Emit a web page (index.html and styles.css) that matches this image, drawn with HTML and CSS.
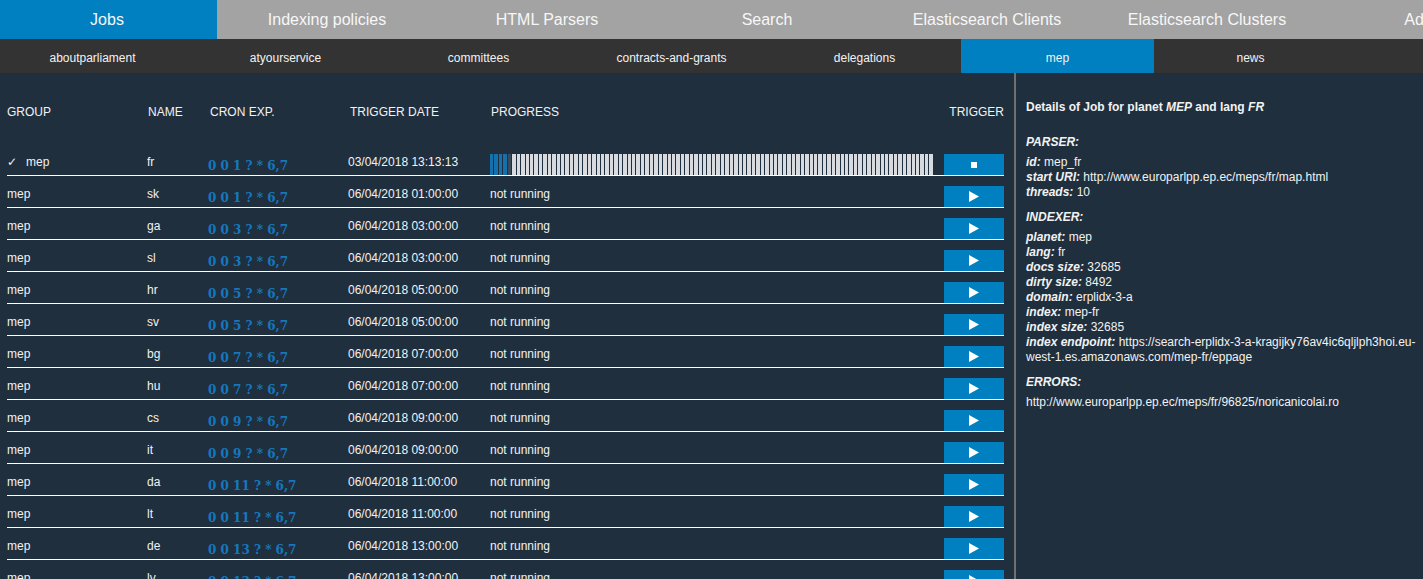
FILE: index.html
```html
<!DOCTYPE html>
<html>
<head>
<meta charset="utf-8">
<title>Jobs</title>
<link rel="stylesheet" href="styles.css">
</head>
<body>
<nav class="topnav">
  <div class="tabs">
    <a class="tab active">Jobs</a>
    <a class="tab">Indexing policies</a>
    <a class="tab">HTML Parsers</a>
    <a class="tab">Search</a>
    <a class="tab">Elasticsearch Clients</a>
    <a class="tab">Elasticsearch Clusters</a>
    <a class="tab">Admin</a>
  </div>
</nav>
<nav class="subnav">
  <div class="subtabs">
    <a class="subtab">aboutparliament</a>
    <a class="subtab">atyourservice</a>
    <a class="subtab">committees</a>
    <a class="subtab">contracts-and-grants</a>
    <a class="subtab">delegations</a>
    <a class="subtab active">mep</a>
    <a class="subtab">news</a>
  </div>
</nav>
<main class="main">
  <section class="jobs">
    <div class="row head">
      <div class="cell">GROUP</div>
      <div class="cell h1">NAME</div>
      <div class="cell h2">CRON EXP.</div>
      <div class="cell h2">TRIGGER DATE</div>
      <div class="cell h1">PROGRESS</div>
      <div class="cell right">TRIGGER</div>
    </div>
    <div class="row">
      <div class="cell"><span class="check">✓</span>mep</div>
      <div class="cell">fr</div>
      <div class="cell cron">0 0 1 ? * 6,7</div>
      <div class="cell">03/04/2018 13:13:13</div>
      <div class="cell progcell"><div class="progress" id="progress"></div></div>
      <div class="cell btncell"><button class="btn"><span class="stop"></span></button></div>
    </div>
    <div class="row"><div class="cell">mep</div><div class="cell">sk</div><div class="cell cron">0 0 1 ? * 6,7</div><div class="cell">06/04/2018 01:00:00</div><div class="cell">not running</div><div class="cell btncell"><button class="btn"><svg width="10" height="11" viewBox="0 0 10 11"><polygon points="0,0 10,5.5 0,11" fill="#fff"/></svg></button></div></div>
    <div class="row"><div class="cell">mep</div><div class="cell">ga</div><div class="cell cron">0 0 3 ? * 6,7</div><div class="cell">06/04/2018 03:00:00</div><div class="cell">not running</div><div class="cell btncell"><button class="btn"><svg width="10" height="11" viewBox="0 0 10 11"><polygon points="0,0 10,5.5 0,11" fill="#fff"/></svg></button></div></div>
    <div class="row"><div class="cell">mep</div><div class="cell">sl</div><div class="cell cron">0 0 3 ? * 6,7</div><div class="cell">06/04/2018 03:00:00</div><div class="cell">not running</div><div class="cell btncell"><button class="btn"><svg width="10" height="11" viewBox="0 0 10 11"><polygon points="0,0 10,5.5 0,11" fill="#fff"/></svg></button></div></div>
    <div class="row"><div class="cell">mep</div><div class="cell">hr</div><div class="cell cron">0 0 5 ? * 6,7</div><div class="cell">06/04/2018 05:00:00</div><div class="cell">not running</div><div class="cell btncell"><button class="btn"><svg width="10" height="11" viewBox="0 0 10 11"><polygon points="0,0 10,5.5 0,11" fill="#fff"/></svg></button></div></div>
    <div class="row"><div class="cell">mep</div><div class="cell">sv</div><div class="cell cron">0 0 5 ? * 6,7</div><div class="cell">06/04/2018 05:00:00</div><div class="cell">not running</div><div class="cell btncell"><button class="btn"><svg width="10" height="11" viewBox="0 0 10 11"><polygon points="0,0 10,5.5 0,11" fill="#fff"/></svg></button></div></div>
    <div class="row"><div class="cell">mep</div><div class="cell">bg</div><div class="cell cron">0 0 7 ? * 6,7</div><div class="cell">06/04/2018 07:00:00</div><div class="cell">not running</div><div class="cell btncell"><button class="btn"><svg width="10" height="11" viewBox="0 0 10 11"><polygon points="0,0 10,5.5 0,11" fill="#fff"/></svg></button></div></div>
    <div class="row"><div class="cell">mep</div><div class="cell">hu</div><div class="cell cron">0 0 7 ? * 6,7</div><div class="cell">06/04/2018 07:00:00</div><div class="cell">not running</div><div class="cell btncell"><button class="btn"><svg width="10" height="11" viewBox="0 0 10 11"><polygon points="0,0 10,5.5 0,11" fill="#fff"/></svg></button></div></div>
    <div class="row"><div class="cell">mep</div><div class="cell">cs</div><div class="cell cron">0 0 9 ? * 6,7</div><div class="cell">06/04/2018 09:00:00</div><div class="cell">not running</div><div class="cell btncell"><button class="btn"><svg width="10" height="11" viewBox="0 0 10 11"><polygon points="0,0 10,5.5 0,11" fill="#fff"/></svg></button></div></div>
    <div class="row"><div class="cell">mep</div><div class="cell">it</div><div class="cell cron">0 0 9 ? * 6,7</div><div class="cell">06/04/2018 09:00:00</div><div class="cell">not running</div><div class="cell btncell"><button class="btn"><svg width="10" height="11" viewBox="0 0 10 11"><polygon points="0,0 10,5.5 0,11" fill="#fff"/></svg></button></div></div>
    <div class="row"><div class="cell">mep</div><div class="cell">da</div><div class="cell cron">0 0 11 ? * 6,7</div><div class="cell">06/04/2018 11:00:00</div><div class="cell">not running</div><div class="cell btncell"><button class="btn"><svg width="10" height="11" viewBox="0 0 10 11"><polygon points="0,0 10,5.5 0,11" fill="#fff"/></svg></button></div></div>
    <div class="row"><div class="cell">mep</div><div class="cell">lt</div><div class="cell cron">0 0 11 ? * 6,7</div><div class="cell">06/04/2018 11:00:00</div><div class="cell">not running</div><div class="cell btncell"><button class="btn"><svg width="10" height="11" viewBox="0 0 10 11"><polygon points="0,0 10,5.5 0,11" fill="#fff"/></svg></button></div></div>
    <div class="row"><div class="cell">mep</div><div class="cell">de</div><div class="cell cron">0 0 13 ? * 6,7</div><div class="cell">06/04/2018 13:00:00</div><div class="cell">not running</div><div class="cell btncell"><button class="btn"><svg width="10" height="11" viewBox="0 0 10 11"><polygon points="0,0 10,5.5 0,11" fill="#fff"/></svg></button></div></div>
    <div class="row"><div class="cell">mep</div><div class="cell">lv</div><div class="cell cron">0 0 13 ? * 6,7</div><div class="cell">06/04/2018 13:00:00</div><div class="cell">not running</div><div class="cell btncell"><button class="btn"><svg width="10" height="11" viewBox="0 0 10 11"><polygon points="0,0 10,5.5 0,11" fill="#fff"/></svg></button></div></div>
  </section>
  <aside class="details">
    <div class="title">Details of Job for planet <em>MEP</em> and lang <em>FR</em></div>
    <div class="sect">PARSER:</div>
    <div class="kv"><b>id:</b> mep_fr</div>
    <div class="kv"><b>start URI:</b> http://www.europarlpp.ep.ec/meps/fr/map.html</div>
    <div class="kv"><b>threads:</b> 10</div>
    <div class="sect gap">INDEXER:</div>
    <div class="kv"><b>planet:</b> mep</div>
    <div class="kv"><b>lang:</b> fr</div>
    <div class="kv"><b>docs size:</b> 32685</div>
    <div class="kv"><b>dirty size:</b> 8492</div>
    <div class="kv"><b>domain:</b> erplidx-3-a</div>
    <div class="kv"><b>index:</b> mep-fr</div>
    <div class="kv"><b>index size:</b> 32685</div>
    <div class="kv"><b>index endpoint:</b> https://search-erplidx-3-a-kragijky76av4ic6qljlph3hoi.eu-west-1.es.amazonaws.com/mep-fr/eppage</div>
    <div class="sect gap">ERRORS:</div>
    <div class="kv">http://www.europarlpp.ep.ec/meps/fr/96825/noricanicolai.ro</div>
  </aside>
</main>
<script src="script.js"></script>
</body>
</html>
```

FILE: styles.css
```css
* { box-sizing: border-box; }
html, body {
  margin: 0;
  padding: 0;
  height: 100%;
  overflow: hidden;
}
body {
  background: #1f2f3e;
  font-family: "Liberation Sans", Arial, sans-serif;
  color: #f2f2f2;
}
.topnav {
  height: 39px;
  background: #a3a3a3;
  overflow: hidden;
}
.tabs {
  display: flex;
  margin-left: -3px;
}
.tab {
  flex: 0 0 220px;
  height: 39px;
  line-height: 39px;
  text-align: center;
  font-size: 16px;
  color: #f7f7f7;
  white-space: nowrap;
}
.tab.active { background: #0080c0; }
.subnav {
  height: 34px;
  background: #333333;
  overflow: hidden;
}
.subtabs {
  display: flex;
  margin-left: -4px;
}
.subtab {
  flex: 0 0 193px;
  height: 34px;
  padding-top: 4px;
  line-height: 30px;
  text-align: center;
  font-size: 12px;
  color: #f2f2f2;
}
.subtab.active { background: #0080c0; }
.main {
  display: flex;
  height: calc(100% - 73px);
}
.jobs {
  flex: 0 0 1014px;
  padding: 22px 0 0 7px;
  overflow: hidden;
}
.row {
  width: 997px;
  display: grid;
  grid-template-columns: 140px 61px 140px 142px 1fr 60px;
  height: 32px;
  border-bottom: 1px solid #ffffff;
  font-size: 12px;
}
.row.head {
  border-bottom: none;
  height: 31px;
  margin-bottom: 18px;
}
.cell {
  align-self: center;
  white-space: nowrap;
  padding-top: 4px;
}
.row.head .cell { padding-top: 2px; }
.row.head .h1 { padding-left: 1px; }
.row.head .h2 { padding-left: 2px; }
.cell.right { text-align: right; }
.check {
  display: inline-block;
  width: 19px;
  font-family: "DejaVu Sans", sans-serif;
  font-size: 12px;
}
.cron {
  font-family: "DejaVu Serif", serif;
  font-weight: bold;
  font-size: 12px;
  color: #1677be;
  margin-top: 8px;
}
.progcell {
  align-self: end;
  padding-top: 0;
  padding-right: 10px;
}
.progress {
  display: flex;
  height: 21px;
}
.seg {
  flex: 1;
  margin-right: 1px;
  background: #d7dadf;
}
.seg.done { background: #1471ae; }
.seg.current { background: #3b4b59; }
.btncell {
  align-self: end;
  padding-top: 0;
}
.btn {
  display: flex;
  align-items: center;
  justify-content: center;
  width: 60px;
  height: 21px;
  border: none;
  padding: 0;
  background: #0080c0;
}
.stop {
  width: 6px;
  height: 6px;
  background: #fff;
}
.details {
  flex: 1;
  border-left: 2px solid #707070;
  padding: 27px 4px 0 10px;
  font-size: 12px;
  line-height: 15px;
  color: #f2f2f2;
}
.title {
  font-weight: bold;
  margin-bottom: 20px;
}
.sect {
  font-weight: bold;
  font-style: italic;
  margin-bottom: 5px;
}
.sect.gap { margin-top: 10px; }
.kv b { font-style: italic; }
```

FILE: script.js
```js
var p = document.getElementById('progress');
for (var i = 0; i < 100; i++) {
  var s = document.createElement('span');
  s.className = 'seg' + (i < 4 ? ' done' : (i === 4 ? ' current' : ''));
  p.appendChild(s);
}
```
